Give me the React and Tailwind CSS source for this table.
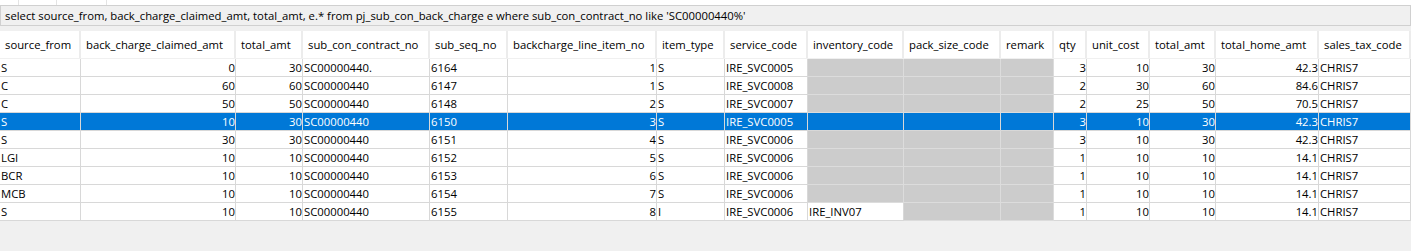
import React from "react";

const cols = [
  { name: "source_from", w: 81, align: "l" },
  { name: "back_charge_claimed_amt", w: 155, align: "r" },
  { name: "total_amt", w: 67, align: "r" },
  { name: "sub_con_contract_no", w: 127, align: "l" },
  { name: "sub_seq_no", w: 78, align: "l" },
  { name: "backcharge_line_item_no", w: 149, align: "r" },
  { name: "item_type", w: 68, align: "l" },
  { name: "service_code", w: 83, align: "l" },
  { name: "inventory_code", w: 96, align: "l" },
  { name: "pack_size_code", w: 97, align: "l" },
  { name: "remark", w: 53, align: "l" },
  { name: "qty", w: 33, align: "r" },
  { name: "unit_cost", w: 63, align: "r" },
  { name: "total_amt", w: 66, align: "r" },
  { name: "total_home_amt", w: 103, align: "r" },
  { name: "sales_tax_code", w: 92, align: "l" },
];

// null = grey (empty) cell
const rows = [
  ["S", "0", "30", "SC00000440.", "6164", "1", "S", "IRE_SVC0005", null, null, null, "3", "10", "30", "42.3", "CHRIS7"],
  ["C", "60", "60", "SC00000440", "6147", "1", "S", "IRE_SVC0008", null, null, null, "2", "30", "60", "84.6", "CHRIS7"],
  ["C", "50", "50", "SC00000440", "6148", "2", "S", "IRE_SVC0007", null, null, null, "2", "25", "50", "70.5", "CHRIS7"],
  ["S", "10", "30", "SC00000440", "6150", "3", "S", "IRE_SVC0005", null, null, null, "3", "10", "30", "42.3", "CHRIS7"],
  ["S", "30", "30", "SC00000440", "6151", "4", "S", "IRE_SVC0006", null, null, null, "3", "10", "30", "42.3", "CHRIS7"],
  ["LGI", "10", "10", "SC00000440", "6152", "5", "S", "IRE_SVC0006", null, null, null, "1", "10", "10", "14.1", "CHRIS7"],
  ["BCR", "10", "10", "SC00000440", "6153", "6", "S", "IRE_SVC0006", null, null, null, "1", "10", "10", "14.1", "CHRIS7"],
  ["MCB", "10", "10", "SC00000440", "6154", "7", "S", "IRE_SVC0006", null, null, null, "1", "10", "10", "14.1", "CHRIS7"],
  ["S", "10", "10", "SC00000440", "6155", "8", "I", "IRE_SVC0006", "IRE_INV07", null, null, "1", "10", "10", "14.1", "CHRIS7"],
];

const SELECTED = 3;

export default function App() {
  return (
    <div className="w-[1411px] h-[251px] bg-[#f0f0f0] text-[11.3px] text-black overflow-hidden" style={{ fontFamily: '"Open Sans", "Noto Sans", sans-serif' }}>
      <div className="h-[5px] bg-white flex">
        <div className="w-[19px] border-r border-[#e4e4e4]" />
        <div className="w-[38px] border-r border-[#e4e4e4]" />
        <div className="w-[50px] border-r border-[#e4e4e4]" />
      </div>
      <div className="h-[21px] border border-[#d0d0d0] bg-[#f0f0f0] pl-[4px] leading-[19px] whitespace-nowrap">
        select source_from, back_charge_claimed_amt, total_amt, e.* from pj_sub_con_back_charge e where sub_con_contract_no like 'SC00000440%'
      </div>
      <div className="h-[5px]" />
      <div className="flex h-[27px] bg-white">
        {cols.map((c, i) => (
          <div
            key={i}
            className="shrink-0 h-full border-r-2 border-[#ececec] pl-[5px] leading-[27px] whitespace-nowrap overflow-hidden"
            style={{ width: c.w }}
          >
            {c.name}
          </div>
        ))}
      </div>
      <div className="h-px bg-[#f0f0f0]" />
      {rows.map((r, ri) => {
        const sel = ri === SELECTED;
        return (
          <div key={ri} className={`flex h-[18px] ${sel ? "bg-[#0078d7] text-white" : "bg-white"}`}>
            {r.map((v, ci) => {
              const c = cols[ci];
              const grey = v === null && !sel;
              return (
                <div
                  key={ci}
                  className={`shrink-0 h-full box-border border-r border-b leading-[17px] whitespace-nowrap overflow-hidden ${
                    grey ? "bg-[#cccccc] border-[#dcdcdc]" : "border-[#d8d8d8]"
                  } ${c.align === "r" ? "text-right pr-0" : "text-left pl-px"}`}
                  style={{ width: c.w }}
                >
                  {v}
                </div>
              );
            })}
          </div>
        );
      })}
    </div>
  );
}
